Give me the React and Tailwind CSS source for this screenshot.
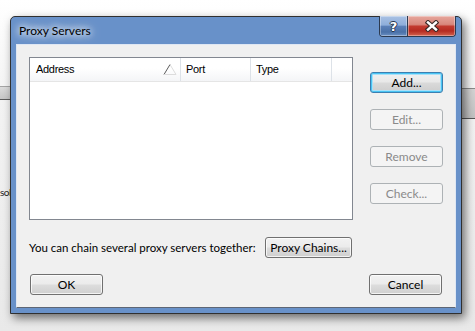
import React from "react";

// classic Win7 push button
function WinButton({ children, kind = "normal", className = "" }) {
  const look = {
    normal:
      "border-[#707070] text-black bg-[linear-gradient(#f2f2f2,#ebebeb_48%,#dddddd_52%,#cfcfcf)] shadow-[inset_0_0_0_1px_rgba(255,255,255,0.75)]",
    focused:
      "border-[#3c7fb1] text-black bg-[linear-gradient(#f0f0f0,#e8e8e8_48%,#dadada_52%,#cdcdcd)] shadow-[inset_0_0_0_1px_#48c4f3,inset_0_0_0_2px_#a9e0f8]",
    disabled: "border-[#adb2b5] text-[#8a8a8a] bg-[#f4f4f4]",
  };
  return (
    <div
      className={`h-[21px] shrink-0 flex items-center justify-center whitespace-nowrap rounded-[3px] border text-[12px] leading-none ${look[kind]} ${className}`}
    >
      {children}
    </div>
  );
}

export default function App() {
  return (
    <div className="relative w-[475px] h-[331px] overflow-hidden bg-[linear-gradient(#ffffff,#f3f3f3_30%,#e9e9e9)] font-['Lato',sans-serif]">
      {/* bits of the application behind the dialog */}
      <div className="absolute left-0 top-[86px] w-[12px] h-[14px] border-t border-t-[#a5a5a5] border-b border-b-[#5c5c5c] bg-[linear-gradient(#dcdcdc,#c6c6c6)]" />
      <div className="absolute right-0 top-[88px] w-[16px] h-[31px] border-t border-t-[#8a8a8a] border-b border-b-[#555555] bg-[linear-gradient(#d4d4d4,#c2c2c2)]" />
      <div className="absolute left-0 top-[187px] text-[10px] tracking-[-0.5px] leading-none text-[#222]">sol</div>

      <div className="relative pl-[10px] pt-[16px]">
        <div className="w-[452px] h-[298px] flex flex-col border border-[#303030] rounded-t-[5px] bg-[#6891c9] shadow-[3px_4px_10px_rgba(0,0,0,0.55)]">
          {/* title bar */}
          <div className="h-[27px] flex justify-between shrink-0">
            <div className="h-full flex items-center pl-[8px] text-[12px] text-black [text-shadow:0_0_6px_#ffffff,0_0_10px_#ffffff,0_0_14px_rgba(255,255,255,0.8)]">
              Proxy Servers
            </div>
            <div className="-mt-px mr-[5px] flex h-[21px] border border-[#2c3a50] border-t-0 rounded-b-[4px] overflow-hidden">
              <div className="w-[28px] h-full flex items-center justify-center border-r border-[#2c3a50] bg-[linear-gradient(#a9c1e3,#8eaedb_45%,#5b80b8_52%,#4a71a8_80%,#6b90c4)] shadow-[inset_0_0_0_1px_rgba(255,255,255,0.35)]">
                <span className="text-[13px] font-bold leading-none text-white font-['DejaVu_Sans',sans-serif] [text-shadow:-1px_0_#26344a,1px_0_#26344a,0_-1px_#26344a,0_1px_#26344a]">
                  ?
                </span>
              </div>
              <div className="w-[47px] h-full flex items-center justify-center bg-[linear-gradient(#e6a69c,#d9887d_42%,#c23a2f_52%,#b52b21_75%,#d4644f)] shadow-[inset_0_0_0_1px_rgba(255,255,255,0.35)]">
                <svg width="14" height="12" viewBox="0 0 14 12">
                  <path d="M3 2.5 L11 9.5 M11 2.5 L3 9.5" stroke="#3a2a28" strokeWidth="4.6" strokeLinecap="square" />
                  <path d="M3 2.5 L11 9.5 M11 2.5 L3 9.5" stroke="#ffffff" strokeWidth="2.4" strokeLinecap="square" />
                </svg>
              </div>
            </div>
          </div>

          {/* client area */}
          <div className="mx-[5px] flex-1 flex flex-col border border-[#dfe7f3] border-b-[#5d6675] bg-[#f0f0f0] pt-[12px] pl-[12px] pr-[12px]">
            <div className="flex">
              {/* list view */}
              <div className="w-[324px] h-[163px] border border-[#828790] bg-white">
                <div className="h-[24px] flex border-b border-[#e5e5e5] bg-[linear-gradient(#ffffff,#ffffff_45%,#f4f5f7)] text-[11px] tracking-[-0.3px] text-black font-['Liberation_Sans',sans-serif]">
                  <div className="w-[151px] flex items-center justify-between pl-[6px] pr-[3px] border-r border-[#dde2e8]">
                    <span>Address</span>
                    <svg width="14" height="11" viewBox="0 0 14 11">
                      <path d="M1 10.5 L7 0.5" stroke="#5a5a5a" strokeWidth="1" fill="none" />
                      <path d="M7 0.5 L13 10.5 L1 10.5" stroke="#dcdcdc" strokeWidth="1" fill="none" />
                    </svg>
                  </div>
                  <div className="w-[70px] flex items-center pl-[5px] border-r border-[#dde2e8]">Port</div>
                  <div className="w-[81px] flex items-center pl-[5px] border-r border-[#dde2e8]">Type</div>
                  <div className="flex-1" />
                </div>
              </div>

              {/* side buttons */}
              <div className="ml-[17px] pt-[15px] flex flex-col gap-[16px]">
                <WinButton kind="focused" className="w-[73px]">Add...</WinButton>
                <WinButton kind="disabled" className="w-[73px]">Edit...</WinButton>
                <WinButton kind="disabled" className="w-[73px]">Remove</WinButton>
                <WinButton kind="disabled" className="w-[73px]">Check...</WinButton>
              </div>
            </div>

            <div className="w-[324px] mt-[17px] flex items-center justify-between pr-[1px]">
              <span className="text-[11.5px] text-black whitespace-nowrap">You can chain several proxy servers together:</span>
              <WinButton className="w-[87px]">Proxy Chains...</WinButton>
            </div>

            <div className="mt-[16px] flex justify-between pl-[1px] pr-[1px]">
              <WinButton className="w-[73px]">OK</WinButton>
              <WinButton className="w-[73px]">Cancel</WinButton>
            </div>
          </div>
          <div className="h-[5px] shrink-0" />
        </div>
      </div>
    </div>
  );
}
